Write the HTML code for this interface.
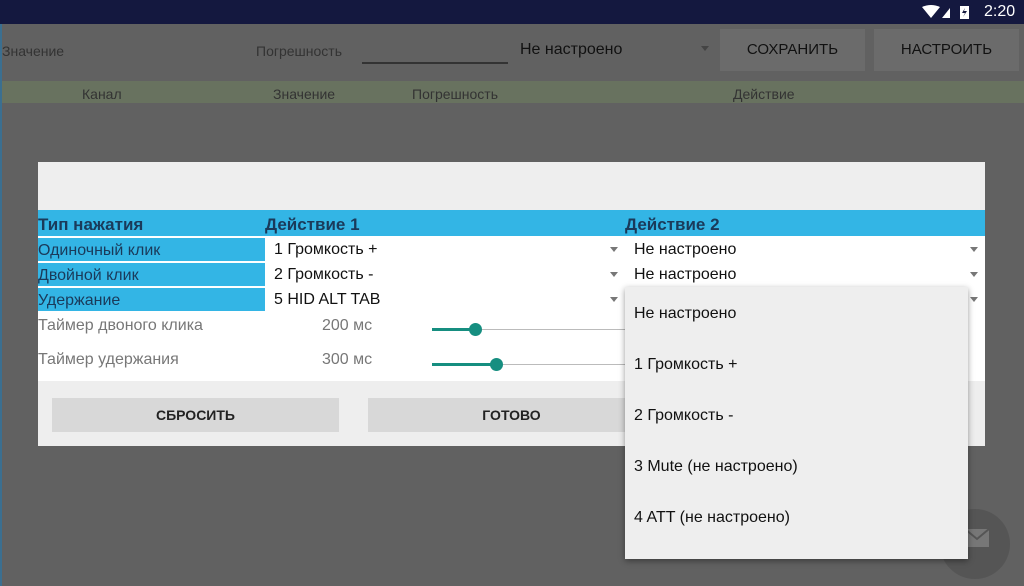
<!DOCTYPE html>
<html><head><meta charset="utf-8"><style>
*{margin:0;padding:0;box-sizing:border-box}
body{width:1024px;height:586px;overflow:hidden;background:#616161;font-family:"Liberation Sans",sans-serif;position:relative}
.a{position:absolute;white-space:nowrap}
.sb{left:0;top:0;width:1024px;height:24px;background:#14183f}
.btn{background:#6b6b6b;color:#111;font-size:15px;text-align:center;line-height:42px}
.dlg{left:38px;top:162px;width:947px;height:284px;background:#eeeeee}
.lbl{background:#33b5e5;color:#1a3a5a;font-size:16px}
.t{font-size:16px;color:#111}
.arr{width:0;height:0;border-left:4px solid transparent;border-right:4px solid transparent;border-top:5px solid #777}
.gb{background:#d8d8d8;color:#222;font-size:14px;font-weight:bold;text-align:center;line-height:34px}
.item{left:634px;font-size:16px;color:#111}
</style></head><body>
<div class="a sb"></div>
<svg class="a" style="left:922px;top:5px" width="60" height="15"><path d="M0 2 Q9 -2 18 2 L9 13Z" fill="#fff"/><path d="M20 13 L28 3 L28 13Z" fill="#fff"/><rect x="38" y="1" width="9" height="13" fill="#fff"/><path d="M43 3 L40 8 L43 8 L41 12 L45 6 L42 6Z" fill="#14183f"/></svg>
<div class="a" style="left:984px;top:3px;color:#fff;font-size:16px">2:20</div>
<div class="a" style="left:0;top:24px;width:2px;height:562px;background:#3b6f90"></div>
<div class="a" style="left:2px;top:43px;font-size:14px;color:#333">Значение</div>
<div class="a" style="left:256px;top:43px;font-size:14px;color:#333">Погрешность</div>
<div class="a" style="left:362px;top:62px;width:146px;height:2px;background:#333"></div>
<div class="a" style="left:520px;top:41px;font-size:16px;color:#111">Не настроено</div>
<div class="a arr" style="left:701px;top:46px;border-top-color:#444"></div>
<div class="a btn" style="left:720px;top:29px;width:145px">СОХРАНИТЬ</div>
<div class="a btn" style="left:874px;top:29px;width:145px">НАСТРОИТЬ</div>
<div class="a" style="left:2px;top:81px;width:1022px;height:22px;background:#68725f"></div>
<div class="a" style="left:82px;top:86px;font-size:14px;color:#333">Канал</div>
<div class="a" style="left:273px;top:86px;font-size:14px;color:#333">Значение</div>
<div class="a" style="left:412px;top:86px;font-size:14px;color:#333">Погрешность</div>
<div class="a" style="left:733px;top:86px;font-size:14px;color:#333">Действие</div>

<div class="a dlg"></div>
<div class="a" style="left:38px;top:236px;width:947px;height:145px;background:#fff"></div>
<div class="a lbl" style="left:38px;top:210px;width:947px;height:26px"></div>
<div class="a" style="left:38px;top:215px;font-weight:bold;font-size:17px;color:#1a3a5a">Тип нажатия</div>
<div class="a" style="left:265px;top:215px;font-weight:bold;font-size:17px;color:#1a3a5a">Действие 1</div>
<div class="a" style="left:625px;top:215px;font-weight:bold;font-size:17px;color:#1a3a5a">Действие 2</div>
<div class="a lbl" style="left:38px;top:238px;width:227px;height:23px;line-height:25px">Одиночный клик</div>
<div class="a lbl" style="left:38px;top:263px;width:227px;height:23px;line-height:25px">Двойной клик</div>
<div class="a lbl" style="left:38px;top:288px;width:227px;height:23px;line-height:25px">Удержание</div>
<div class="a t" style="left:274px;top:241px">1 Громкость +</div>
<div class="a t" style="left:274px;top:266px">2 Громкость -</div>
<div class="a t" style="left:274px;top:291px">5 HID ALT TAB</div>
<div class="a arr" style="left:610px;top:247px"></div>
<div class="a arr" style="left:610px;top:272px"></div>
<div class="a arr" style="left:610px;top:297px"></div>
<div class="a t" style="left:634px;top:241px">Не настроено</div>
<div class="a t" style="left:634px;top:266px">Не настроено</div>
<div class="a arr" style="left:970px;top:247px"></div>
<div class="a arr" style="left:970px;top:272px"></div>
<div class="a arr" style="left:970px;top:297px"></div>
<div class="a" style="left:38px;top:317px;font-size:16px;color:#777">Таймер двоного клика</div>
<div class="a" style="left:322px;top:317px;font-size:16px;color:#777">200 мс</div>
<div class="a" style="left:38px;top:351px;font-size:16px;color:#777">Таймер удержания</div>
<div class="a" style="left:322px;top:351px;font-size:16px;color:#777">300 мс</div>
<div class="a" style="left:432px;top:329px;width:200px;height:1px;background:#bbb"></div>
<div class="a" style="left:432px;top:328px;width:44px;height:3px;background:#168e80"></div>
<div class="a" style="left:469px;top:323px;width:13px;height:13px;border-radius:50%;background:#168e80"></div>
<div class="a" style="left:432px;top:364px;width:200px;height:1px;background:#bbb"></div>
<div class="a" style="left:432px;top:363px;width:65px;height:3px;background:#168e80"></div>
<div class="a" style="left:490px;top:358px;width:13px;height:13px;border-radius:50%;background:#168e80"></div>
<div class="a gb" style="left:52px;top:398px;width:287px">СБРОСИТЬ</div>
<div class="a gb" style="left:368px;top:398px;width:287px">ГОТОВО</div>
<div class="a gb" style="left:684px;top:398px;width:287px"></div>

<div class="a" style="left:940px;top:509px;width:70px;height:70px;border-radius:50%;background:#555"></div>
<svg class="a" style="left:964px;top:528px" width="26" height="20"><rect x="1" y="1" width="24" height="18" fill="#777"/><path d="M1 1 L13 11 L25 1" stroke="#555" stroke-width="2" fill="none"/></svg>

<div class="a" style="left:625px;top:287px;width:343px;height:272px;background:#eeeeee;box-shadow:0 2px 6px rgba(0,0,0,.4)"></div>
<div class="a item" style="top:305px">Не настроено</div>
<div class="a item" style="top:356px">1 Громкость +</div>
<div class="a item" style="top:407px">2 Громкость -</div>
<div class="a item" style="top:458px">3 Mute (не настроено)</div>
<div class="a item" style="top:509px">4 ATT (не настроено)</div>
</body></html>
